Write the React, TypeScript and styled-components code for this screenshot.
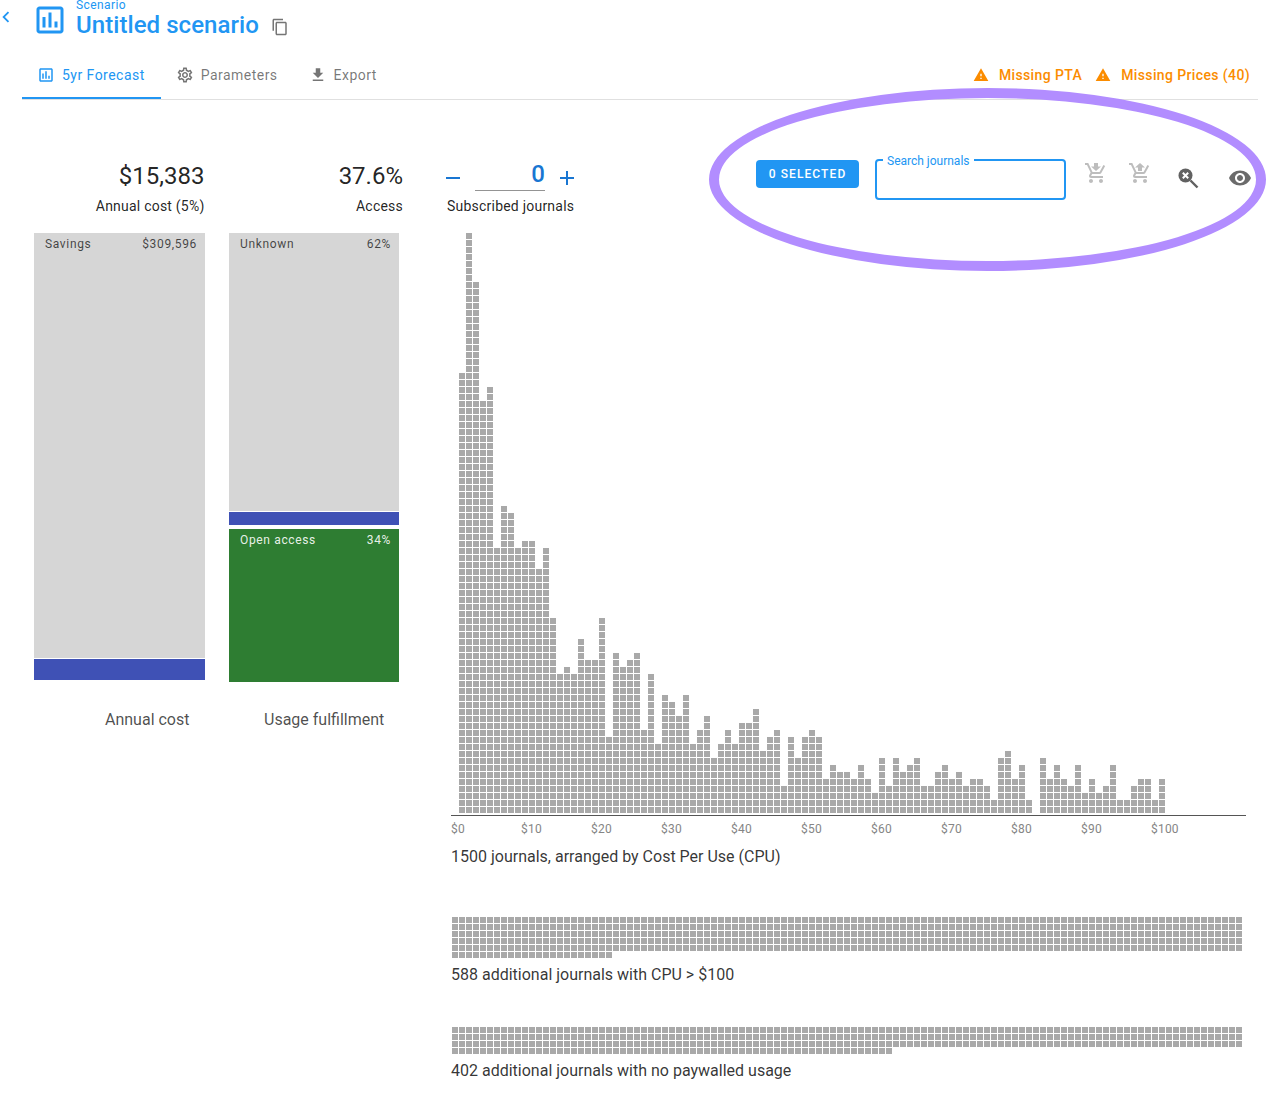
import * as React from 'react'
import styled, { createGlobalStyle } from 'styled-components'
import {
    MdAdd,
    MdChevronLeft,
    MdContentCopy,
    MdGetApp,
    MdOutlineAssessment,
    MdOutlineSettings,
    MdRemove,
    MdVisibility,
    MdWarning,
} from 'react-icons/md'

const BLUE = '#2196f3'
const DARK_BLUE = '#1976d2'
const ORANGE = '#fb8c00'
const CELL = '#a9a9a9'

// journals per $1 of cost per use, read off the histogram
const COLUMNS = [
    63, 83, 76, 59, 61, 38, 44, 43, 38, 39, 39, 35, 38, 28, 20, 21, 20, 25, 22, 22, 28, 11, 23, 21, 22, 23, 12, 20, 10, 17, 16, 14, 17,
    10, 12, 14, 8, 10, 12, 10, 13, 13, 15, 9, 11, 12, 4, 11, 8, 11, 12, 11, 5, 7, 6, 6, 5, 7, 5, 3, 8, 4, 8, 6, 7, 8, 4, 4, 6, 7, 5, 6,
    4, 5, 5, 4, 2, 8, 9, 5, 7, 2, 0, 8, 5, 7, 5, 4, 7, 3, 5, 3, 4, 7, 2, 2, 4, 5, 5, 2, 5,
]
const TICKS = [0, 10, 20, 30, 40, 50, 60, 70, 80, 90, 100]

const GlobalStyle = createGlobalStyle`
    html, body {
        margin: 0;
        padding: 0;
        background: #fff;
        font-family: Roboto, "Liberation Sans", sans-serif;
    }
`

const CART_PATH =
    'M9 20C9 21.11 8.11 22 7 22S5 21.11 5 20 5.9 18 7 18 9 18.9 9 20M17 18C15.9 18 15 18.9 15 20S15.9 22 17 22 19 21.11 19 20 18.11 18 17 18M7.17 14.75L7.2 14.63L8.1 13H15.55C16.3 13 16.96 12.59 17.3 11.97L21.16 4.96L19.42 4H19.41L18.31 6L15.55 11H8.53L8.4 10.73L6.16 6L5.21 4L4.27 2H1V4H3L6.6 11.59L5.25 14.04C5.09 14.32 5 14.65 5 15C5 16.1 5.9 17 7 17H19V15H7.42C7.29 15 7.17 14.89 7.17 14.75Z'

const CartDown: React.FC = () => (
    <svg width="24" height="24" viewBox="0 0 24 24" fill="rgba(0,0,0,0.26)">
        <path d={CART_PATH} />
        <path d="M14 2V5.5H17L12 10L7 5.5H10V2H14Z" />
    </svg>
)

const CartUp: React.FC = () => (
    <svg width="24" height="24" viewBox="0 0 24 24" fill="rgba(0,0,0,0.26)">
        <path d={CART_PATH} />
        <path d="M12 2L17 6.5H14V10H10V6.5H7L12 2Z" />
    </svg>
)

const MagnifyClose: React.FC = () => (
    <svg width="24" height="24" viewBox="0 0 24 24">
        <circle cx="9.5" cy="9.5" r="7" fill="#616161" />
        <path d="M6.8 6.8L12.2 12.2M12.2 6.8L6.8 12.2" stroke="#fff" strokeWidth="2" fill="none" />
        <path d="M14.5 14.5L21.5 21.5" stroke="#616161" strokeWidth="2.4" fill="none" />
    </svg>
)

const CellGroup: React.FC<{ count: number }> = ({ count }) => (
    <>
        {Array.from({ length: count }, (_, i) => (
            <Cell key={i} />
        ))}
    </>
)

const App: React.FC = () => {
    return (
        <Page>
            <GlobalStyle />
            <Header>
                <BackIcon />
                <LogoIcon />
                <TitleBlock>
                    <Eyebrow>Scenario</Eyebrow>
                    <Title>Untitled scenario</Title>
                </TitleBlock>
                <CopyIcon />
            </Header>

            <TabBar>
                <Tab $active>
                    <MdOutlineAssessment size={18} />
                    5yr Forecast
                </Tab>
                <Tab>
                    <MdOutlineSettings size={18} />
                    Parameters
                </Tab>
                <Tab>
                    <MdGetApp size={18} />
                    Export
                </Tab>
                <Warnings>
                    <WarningItem>
                        <MdWarning size={16} />
                        Missing PTA
                    </WarningItem>
                    <WarningItem>
                        <MdWarning size={16} />
                        Missing Prices (40)
                    </WarningItem>
                </Warnings>
            </TabBar>

            <Main>
                <Summary>
                    <SummaryColumn $width={171}>
                        <StatValue $inset={0.5}>$15,383</StatValue>
                        <StatLabel $inset={0.5}>Annual cost (5%)</StatLabel>
                        <BarArea>
                            <Bar $width={171}>
                                <Segment $height={425} $color="#d6d6d6">
                                    <span>Savings</span>
                                    <span>$309,596</span>
                                </Segment>
                                <Segment $height={21} $color="#3f51b5" />
                            </Bar>
                        </BarArea>
                        <BarTitle $indent={71}>Annual cost</BarTitle>
                    </SummaryColumn>
                    <SummaryColumn $width={174}>
                        <StatValue>37.6%</StatValue>
                        <StatLabel>Access</StatLabel>
                        <BarArea>
                            <Bar $width={170}>
                                <Segment $height={278} $color="#d6d6d6">
                                    <span>Unknown</span>
                                    <span>62%</span>
                                </Segment>
                                <Segment $height={13} $color="#3f51b5" />
                                <Segment $height={153} $color="#2e7d32" $light $gap={3}>
                                    <span>Open access</span>
                                    <span>34%</span>
                                </Segment>
                            </Bar>
                        </BarArea>
                        <BarTitle $indent={35}>Usage fulfillment</BarTitle>
                    </SummaryColumn>
                </Summary>

                <ChartPane>
                    <Toolbar>
                        <Subscribed>
                            <Stepper>
                                <StepIcon as={MdRemove} size={24} />
                                <CountField>0</CountField>
                                <StepIcon as={MdAdd} size={24} />
                            </Stepper>
                            <SubscribedLabel>Subscribed journals</SubscribedLabel>
                        </Subscribed>
                        <SelectedButton>0 SELECTED</SelectedButton>
                        <SearchBox>
                            <SearchLegend>Search journals</SearchLegend>
                            <SearchInput />
                        </SearchBox>
                        <ToolIcon $width={44} $top={2}>
                            <CartDown />
                        </ToolIcon>
                        <ToolIcon $width={48} $top={2}>
                            <CartUp />
                        </ToolIcon>
                        <ToolIcon $width={52} $top={7}>
                            <MagnifyClose />
                        </ToolIcon>
                        <ToolIcon $width={24} $top={7}>
                            <MdVisibility size={24} color="#6b6b6b" />
                        </ToolIcon>
                    </Toolbar>

                    <Histogram>
                        {COLUMNS.map((count, i) => (
                            <HistogramColumn key={i}>
                                <CellGroup count={count} />
                            </HistogramColumn>
                        ))}
                    </Histogram>
                    <Ticks>
                        {TICKS.map((tick) => (
                            <Tick key={tick}>${tick}</Tick>
                        ))}
                    </Ticks>
                    <Caption>1500 journals, arranged by Cost Per Use (CPU)</Caption>

                    <CellGrid $top={50}>
                        <CellGroup count={588} />
                    </CellGrid>
                    <Caption>588 additional journals with CPU &gt; $100</Caption>

                    <CellGrid $top={42}>
                        <CellGroup count={402} />
                    </CellGrid>
                    <Caption>402 additional journals with no paywalled usage</Caption>
                </ChartPane>
            </Main>

            <Highlight />
        </Page>
    )
}

export default App

const Page = styled.div`
    position: relative;
    width: 1271px;
    height: 1097px;
    overflow: hidden;
    background: #fff;
    color: rgba(0, 0, 0, 0.87);
`

const Header = styled.header`
    display: flex;
    align-items: flex-start;
    height: 50px;
`

const BackIcon = styled(MdChevronLeft)`
    flex: none;
    width: 22px;
    height: 22px;
    margin: 6px 0 0 -5px;
    color: ${BLUE};
`

const LogoIcon = styled(MdOutlineAssessment)`
    flex: none;
    width: 36px;
    height: 36px;
    margin: 2px 0 0 15px;
    color: ${BLUE};
`

const TitleBlock = styled.div`
    margin: -2px 0 0 8px;
`

const Eyebrow = styled.div`
    font-size: 12px;
    line-height: 14px;
    letter-spacing: 0.4px;
    color: ${BLUE};
`

const Title = styled.h1`
    margin: -1px 0 0;
    font-size: 24px;
    line-height: 28px;
    font-weight: 500;
    letter-spacing: 0.06px;
    color: ${BLUE};
`

const CopyIcon = styled(MdContentCopy)`
    flex: none;
    width: 18px;
    height: 18px;
    margin: 18px 0 0 12px;
    color: #757575;
`

const TabBar = styled.nav`
    display: flex;
    align-items: stretch;
    height: 50px;
    box-sizing: border-box;
    margin: 0 13px 0 22px;
    border-bottom: 1px solid #e0e0e0;
`

const Tab = styled.div<{ $active?: boolean }>`
    display: flex;
    align-items: center;
    gap: 7px;
    box-sizing: border-box;
    height: 49px;
    padding: 3px 16px 0 15px;
    font-size: 14px;
    letter-spacing: 0.47px;
    color: ${(p) => (p.$active ? BLUE : 'rgba(0, 0, 0, 0.54)')};
    border-bottom: 2px solid ${(p) => (p.$active ? BLUE : 'transparent')};
`

const Warnings = styled.div`
    display: flex;
    align-items: center;
    gap: 13px;
    margin-left: auto;
    padding: 1px 8px 0 0;
`

const WarningItem = styled.div`
    display: flex;
    align-items: center;
    gap: 10px;
    font-size: 14px;
    font-weight: 500;
    letter-spacing: 0.38px;
    color: ${ORANGE};
`

const Main = styled.main`
    display: flex;
    align-items: flex-start;
`

const Summary = styled.section`
    display: flex;
    gap: 24px;
    flex: none;
    margin: 62px 43px 0 34px;
`

const SummaryColumn = styled.div<{ $width: number }>`
    width: ${(p) => p.$width}px;
`

const StatValue = styled.div<{ $inset?: number }>`
    padding-right: ${(p) => p.$inset ?? 0}px;
    font-size: 24px;
    line-height: 28px;
    text-align: right;
    color: rgba(0, 0, 0, 0.87);
`

const StatLabel = styled.div<{ $inset?: number }>`
    margin-top: 6px;
    padding-right: ${(p) => p.$inset ?? 0}px;
    font-size: 14px;
    line-height: 20px;
    letter-spacing: 0.22px;
    text-align: right;
`

const BarArea = styled.div`
    height: 477px;
    margin-top: 17px;
`

const Bar = styled.div<{ $width: number }>`
    display: flex;
    flex-direction: column;
    width: ${(p) => p.$width}px;
`

const Segment = styled.div<{ $height: number; $color: string; $light?: boolean; $gap?: number }>`
    display: flex;
    justify-content: space-between;
    box-sizing: border-box;
    height: ${(p) => p.$height}px;
    margin-bottom: 1px;
    margin-top: ${(p) => p.$gap ?? 0}px;
    padding: 4px 8px 0 11px;
    background: ${(p) => p.$color};
    font-size: 12px;
    line-height: 14px;
    letter-spacing: 0.65px;
    color: ${(p) => (p.$light ? 'rgba(255, 255, 255, 0.9)' : 'rgba(0, 0, 0, 0.7)')};
`

const BarTitle = styled.div<{ $indent: number }>`
    padding-left: ${(p) => p.$indent}px;
    font-size: 16px;
    line-height: 20px;
    white-space: nowrap;
    color: rgba(0, 0, 0, 0.7);
`

const ChartPane = styled.section`
    display: flex;
    flex-direction: column;
    flex: none;
    width: 825px;
`

const Toolbar = styled.div`
    display: flex;
    align-items: flex-start;
    height: 74px;
    margin-top: 59px;
`

const Subscribed = styled.div`
    flex: none;
    width: 130px;
    margin-right: 180px;
`

const Stepper = styled.div`
    display: flex;
    align-items: flex-end;
    height: 32px;
    margin-left: -5px;
`

const StepIcon = styled.svg`
    flex: none;
    margin-bottom: 1px;
    color: ${DARK_BLUE};
`

const CountField = styled.div`
    box-sizing: border-box;
    flex: none;
    width: 70px;
    height: 32px;
    margin: 0 10px;
    padding-top: 1px;
    border-bottom: 1px solid #949494;
    font-size: 24px;
    font-weight: 500;
    line-height: 28px;
    text-align: right;
    color: ${DARK_BLUE};
`

const SubscribedLabel = styled.div`
    margin: 5px 0 0 1px;
    font-size: 14px;
    line-height: 20px;
    letter-spacing: 0.22px;
    white-space: nowrap;
`

const SelectedButton = styled.button`
    flex: none;
    width: 103px;
    height: 28px;
    margin: 1px 16px 0 0;
    padding: 0;
    border: 0;
    border-radius: 4px;
    background: ${BLUE};
    color: #fff;
    font-family: inherit;
    font-size: 12px;
    font-weight: 500;
    letter-spacing: 1.1px;
`

const SearchBox = styled.fieldset`
    flex: none;
    box-sizing: border-box;
    width: 191px;
    height: 41px;
    margin: 0 18px 0 0;
    padding: 0 6px;
    border: 2px solid ${BLUE};
    border-radius: 4px;
`

const SearchLegend = styled.legend`
    height: 2px;
    padding: 0 4px;
    font-size: 12px;
    line-height: 5px;
    color: ${BLUE};
`

const SearchInput = styled.input`
    display: block;
    width: 100%;
    height: 30px;
    padding: 0;
    border: 0;
    outline: 0;
    background: transparent;
`

const ToolIcon = styled.div<{ $width: number; $top: number }>`
    flex: none;
    width: ${(p) => p.$width}px;
    height: 24px;
    margin-top: ${(p) => p.$top}px;
`

const Histogram = styled.div`
    display: flex;
    align-items: flex-end;
    gap: 1px;
    flex: none;
    box-sizing: border-box;
    width: 795px;
    height: 583px;
    margin-left: 5px;
    padding: 0 0 2px 8px;
    border-bottom: 1px solid #555;
`

const HistogramColumn = styled.div`
    display: flex;
    flex-direction: column;
    gap: 1px;
    width: 6px;
`

const Cell = styled.div`
    flex: none;
    width: 6px;
    height: 6px;
    background: ${CELL};
`

const Ticks = styled.div`
    display: flex;
    margin: 6px 0 4px 5px;
`

const Tick = styled.div`
    width: 70px;
    font-size: 12px;
    line-height: 14px;
    letter-spacing: 0.2px;
    color: #858585;
`

const Caption = styled.div`
    margin: 7px 0 0 5px;
    font-size: 16px;
    line-height: 20px;
    color: rgba(0, 0, 0, 0.8);
`

const CellGrid = styled.div<{ $top: number }>`
    display: flex;
    flex-wrap: wrap;
    gap: 1px;
    width: 790px;
    margin: ${(p) => p.$top}px 0 0 6px;
`

// hand-drawn annotation lying over the toolbar
const Highlight = styled.div`
    position: absolute;
    left: 709px;
    top: 88px;
    box-sizing: border-box;
    width: 557px;
    height: 183px;
    border: 10px solid #b28dff;
    border-radius: 50%;
    pointer-events: none;
`
